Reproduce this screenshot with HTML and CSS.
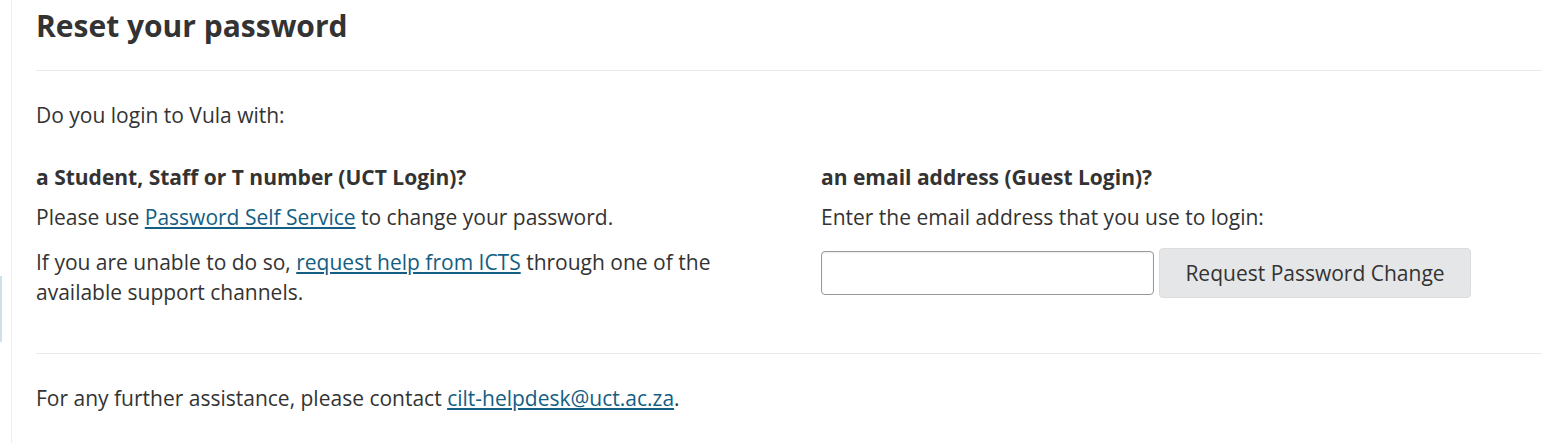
FILE: index.html
```html
<!DOCTYPE html>
<html lang="en">
<head>
<meta charset="utf-8">
<title>Reset your password</title>
<link rel="stylesheet" href="styles.css">
</head>
<body>
<div class="side-tab"></div>
<div class="page">
  <h1 class="title">Reset your password</h1>
  <hr class="rule rule-top">
  <p class="intro">Do you login to Vula with:</p>
  <div class="cols">
    <div class="col">
      <h2 class="col-head">a Student, Staff or T number (UCT Login)?</h2>
      <p class="line">Please use <a href="#">Password Self Service</a> to change your password.</p>
      <p class="line para-2">If you are unable to do so, <a href="#">request help from ICTS</a> through one of the<br>available support channels.</p>
    </div>
    <div class="col">
      <h2 class="col-head">an email address (Guest Login)?</h2>
      <p class="line">Enter the email address that you use to login:</p>
      <form class="form-row">
        <input class="email" type="text" aria-label="Email address">
        <button class="btn" type="button">Request Password Change</button>
      </form>
    </div>
  </div>
  <hr class="rule rule-bottom">
  <p class="footer-text">For any further assistance, please contact <a href="#">cilt-helpdesk@uct.ac.za</a>.</p>
</div>
</body>
</html>
```
FILE: styles.css
```css
html, body {
  margin: 0;
  padding: 0;
  background: #fff;
}
body {
  font-family: "Open Sans", "Noto Sans", sans-serif;
  font-size: 21px;
  line-height: 30px;
  color: #333;
  overflow: hidden;
}
.side-tab {
  position: absolute;
  left: 0;
  top: 276px;
  width: 2px;
  height: 66px;
  background: #cfe0ea;
}
.page {
  margin-left: 11px;
  border-left: 1px solid #eee;
  padding: 6px 0 40px 24px;
  min-height: 400px;
}
.title {
  margin: 0;
  font-size: 30px;
  line-height: 40px;
  font-weight: 700;
  color: #333;
}
.rule {
  border: 0;
  border-top: 1px solid #e9e9e9;
  margin: 0;
}
.rule-top { margin-top: 24px; }
.intro { margin: 29px 0 0; }
.cols {
  display: grid;
  grid-template-columns: 785px 1fr;
  margin-top: 32px;
}
.col-head {
  margin: 0;
  font-size: 21px;
  line-height: 30px;
  font-weight: 700;
}
.line { margin: 10px 0 0; }
.para-2 { margin-top: 15px; }
a {
  color: #135e82;
  text-decoration: underline;
}
.form-row {
  display: flex;
  align-items: center;
  gap: 5px;
  margin-top: 16px;
}
.email {
  width: 333px;
  height: 44px;
  box-sizing: border-box;
  border: 1px solid #999;
  border-radius: 4px;
  padding: 0 10px;
  font: inherit;
  background: #fff;
  box-shadow: inset 0 1px 2px rgba(0,0,0,0.08);
}
.btn {
  width: 312px;
  height: 50px;
  box-sizing: border-box;
  border: 1px solid #dcdcdc;
  border-radius: 4px;
  background: #e5e6e8;
  color: #333;
  font-family: "Open Sans", "Noto Sans", sans-serif;
  font-size: 21px;
  padding: 0;
}
.rule-bottom { margin-top: 46px; }
.footer-text { margin: 29px 0 0; }
```
